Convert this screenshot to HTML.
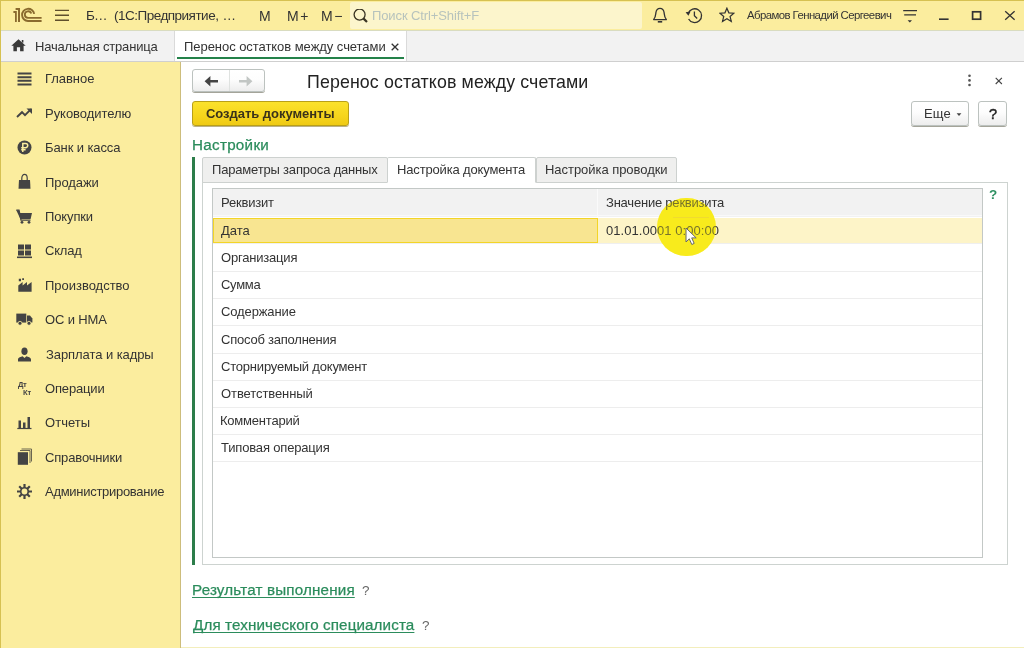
<!DOCTYPE html>
<html lang="ru"><head><meta charset="utf-8">
<title>Перенос остатков между счетами</title>
<style>
*{box-sizing:border-box;margin:0;padding:0}
html,body{width:1024px;height:648px;overflow:hidden;background:#fff;font-family:"Liberation Sans",sans-serif;color:#333;font-size:13px}
.a,.t,svg{position:absolute}
.t{white-space:nowrap;line-height:1;will-change:transform}
#top{left:0;top:0;width:1024px;height:31px;background:#fbed9e;border-bottom:1px solid #d9dcc0}
#search{left:350px;top:2px;width:292px;height:27px;background:#fcf5cc;border-radius:2px}
#tabs{left:0;top:31px;width:1024px;height:31px;background:#f2f2f2;border-bottom:1px solid #cfcfcf}
#tabact{left:174px;top:31px;width:233px;height:30px;background:#fff;border-left:1px solid #dadada;border-right:1px solid #dadada}
#tabact i{position:absolute;left:2px;right:2px;top:25.5px;height:2.5px;background:#24824a}
#side{left:0;top:62px;width:181px;height:586px;background:#fbed9e;border-right:1px solid #cdbd7c}
#frame{left:0;top:0;width:1024px;height:648px;border-left:1px solid #d6c152;border-top:1px solid #d6c152;pointer-events:none}
#botline{left:181px;top:646.5px;width:843px;height:1px;background:#f3eebc}
.btn{position:absolute;border:1px solid #bcc2bf;border-radius:3px;background:linear-gradient(#fff 0%,#fdfdfd 45%,#ededed 100%);box-shadow:0 1px 0 rgba(90,90,70,.55)}
#create{left:192px;top:101px;width:157px;height:25px;border:1px solid #b9a018;background:linear-gradient(#fbe22c,#f6d51c 60%,#efca14);border-radius:3px;box-shadow:0 1px 0 rgba(120,100,20,.5)}
#gbar{left:192.3px;top:157px;width:2.5px;height:407.7px;background:#2c7d4a}
#panel{left:202px;top:182px;width:806px;height:383px;border:1px solid #cdd3d0;background:#fff}
.tab{position:absolute;top:157px;height:26px;border:1px solid #cdd1cf;border-radius:2px 2px 0 0;background:#efefee}
.tab.on{background:#fff;border-bottom-color:#fff}
#grid{left:212px;top:188px;width:771px;height:370px;border:1px solid #c3c8c6;background:#fff}
#ghead{left:213px;top:189px;width:769px;height:28px;background:#f2f2f2}
.row{position:absolute;left:213px;width:769px;height:1px;background:#ededed}
</style></head><body>
<div class="a" id="top"></div>
<div class="a" id="search"></div>
<div class="a" id="tabs"></div>
<div class="a" id="tabact"><i></i></div>
<div class="a" id="side"></div>
<svg style="left:12px;top:6px" width="32" height="18" viewBox="12 6 32 18"><g fill="none" stroke="#8a6a2e"><path d="M13.4 12H15.9V22" stroke-width="1.8"/><path d="M15.6 9H19V22" stroke-width="2"/><path d="M34.2 13.9A6.1 6.1 0 1 0 28 21H41.6" stroke-width="1.9"/><path d="M31.3 13.6A3.3 3.3 0 1 0 28 17.9H41.6" stroke-width="1.8"/></g></svg>
<svg style="left:55px;top:9px" width="15" height="13" viewBox="0 0 15 13"><path d="M0 1.4H14M0 6.3H14M0 11.2H14" stroke="#5f4e2c" stroke-width="1.4" fill="none"/></svg>
<div class="t" style="left:85.72px;top:9.00px;font-size:13.5px;color:#333;">Б<span style="margin-left:-0.90px;">…</span></div>
<div class="t" style="left:113.89px;top:9.00px;font-size:13.5px;color:#333;"><span style="letter-spacing:-0.504px;">(1С:Предприятие,</span> <span style="margin-left:0.35px;">…</span></div>
<div class="t" style="left:259.48px;top:9.00px;font-size:14px;color:#333;">M</div>
<div class="t" style="left:287.28px;top:9.00px;font-size:14px;color:#333;">M<span style="margin-left:1.69px;">+</span></div>
<div class="t" style="left:320.78px;top:9.00px;font-size:14px;color:#333;">M<span style="margin-left:1.49px;">−</span></div>
<svg style="left:353px;top:9px" width="16" height="15" viewBox="0 0 16 15"><circle cx="6.6" cy="5.6" r="5.5" fill="none" stroke="#3a3424" stroke-width="1.3"/><path d="M10.6 9.6L14 13" stroke="#3a3424" stroke-width="2.2"/></svg>
<div class="t" style="left:372.06px;top:9.00px;font-size:13px;color:#b7c3bd;letter-spacing:-0.106px;">Поиск Ctrl+Shift+F</div>
<div class="t" style="left:746.60px;top:10.00px;font-size:11.4px;color:#333;letter-spacing:-0.574px;">Абрамов Геннадий Сергеевич</div>
<svg style="left:652px;top:7px" width="16" height="17" viewBox="0 0 16 17"><path d="M1.6 12.6C3.6 10.6 3.6 8.6 3.9 5.6C4.3 2.9 6 1.4 8 1.4C10 1.4 11.7 2.9 12.1 5.6C12.4 8.6 12.4 10.6 14.4 12.6Z" fill="none" stroke="#333" stroke-width="1.3" stroke-linejoin="round"/><path d="M5.8 14.8H10.2" stroke="#333" stroke-width="1.6"/></svg>
<svg style="left:685px;top:7px" width="18" height="17" viewBox="0 0 18 17"><path d="M3.2 6.2A6.9 6.9 0 1 1 3.6 12" fill="none" stroke="#333" stroke-width="1.3"/><path d="M0.6 5.2L5.6 4.6L3.4 8.8Z" fill="#333"/><path d="M9.4 4.4V8.8L12.2 11.4" fill="none" stroke="#333" stroke-width="1.3"/></svg>
<svg style="left:718.8px;top:7.4px" width="15.8" height="15.8" viewBox="0 0 17 17"><path d="M8.5 1.3L10.6 6.3L16 6.7L11.9 10.2L13.2 15.5L8.5 12.6L3.8 15.5L5.1 10.2L1 6.7L6.4 6.3Z" fill="none" stroke="#333" stroke-width="1.3"/></svg>
<svg style="left:903px;top:9px" width="15" height="15" viewBox="0 0 15 15"><path d="M0.2 1.6H14M1.2 5.9H13" stroke="#333" stroke-width="1.3" fill="none"/><path d="M4.6 11.2H9L6.8 13.6Z" fill="#333"/></svg>
<svg style="left:938px;top:17px" width="12" height="4" viewBox="0 0 12 4"><path d="M1 2.2H10.6" stroke="#333" stroke-width="1.6"/></svg>
<svg style="left:971px;top:10px" width="11" height="11" viewBox="0 0 11 11"><rect x="1.6" y="1.8" width="8" height="7.4" fill="none" stroke="#333" stroke-width="1.7"/></svg>
<svg style="left:1004px;top:10px" width="12" height="11" viewBox="0 0 12 11"><path d="M1.2 1.2L10.6 9.8M10.6 1.2L1.2 9.8" stroke="#333" stroke-width="1.3"/></svg>
<svg style="left:10.5px;top:38.5px" width="15" height="13" viewBox="0 0 15 13"><path d="M7.5 0.3L0.3 6.8H2.4V12.3H5.9V8.2H9.1V12.3H12.6V6.8H14.7Z" fill="#3a3a3a"/><path d="M10.8 1H12.4V3.6H10.8Z" fill="#3a3a3a"/></svg>
<div class="t" style="left:35.06px;top:40.00px;font-size:13px;color:#333;letter-spacing:-0.180px;">Начальная страница</div>
<div class="t" style="left:183.56px;top:40.00px;font-size:13px;color:#333;letter-spacing:-0.050px;">Перенос остатков между счетами</div>
<svg style="left:390.5px;top:42.5px" width="8" height="8" viewBox="0 0 8 8"><path d="M0.7 0.7L7.3 7.3M7.3 0.7L0.7 7.3" stroke="#333" stroke-width="1.3"/></svg>
<div class="t" style="left:45.16px;top:72.00px;font-size:13px;color:#333;letter-spacing:-0.045px;">Главное</div>
<div class="t" style="left:45.16px;top:107.00px;font-size:13px;color:#333;letter-spacing:-0.035px;">Руководителю</div>
<div class="t" style="left:45.16px;top:141.00px;font-size:13px;color:#333;letter-spacing:-0.103px;">Банк и касса</div>
<div class="t" style="left:44.96px;top:176.00px;font-size:13px;color:#333;letter-spacing:-0.076px;">Продажи</div>
<div class="t" style="left:44.96px;top:210.00px;font-size:13px;color:#333;letter-spacing:-0.127px;">Покупки</div>
<div class="t" style="left:45.35px;top:244.00px;font-size:13px;color:#333;letter-spacing:-0.189px;">Склад</div>
<div class="t" style="left:45.16px;top:279.00px;font-size:13px;color:#333;letter-spacing:-0.018px;">Производство</div>
<div class="t" style="left:45.31px;top:313.00px;font-size:13px;color:#333;letter-spacing:-0.153px;">ОС и НМА</div>
<div class="t" style="left:45.58px;top:348.00px;font-size:13px;color:#333;letter-spacing:-0.070px;">Зарплата и кадры</div>
<div class="t" style="left:45.41px;top:382.00px;font-size:13px;color:#333;letter-spacing:-0.164px;">Операции</div>
<div class="t" style="left:45.41px;top:416.00px;font-size:13px;color:#333;letter-spacing:0.050px;">Отчеты</div>
<div class="t" style="left:45.35px;top:451.00px;font-size:13px;color:#333;letter-spacing:-0.152px;">Справочники</div>
<div class="t" style="left:45.40px;top:485.00px;font-size:13px;color:#333;letter-spacing:-0.288px;">Администрирование</div>
<svg style="left:17px;top:72px" width="15" height="14" viewBox="0 0 15 14"><path d="M0.5 1.6H14.5M0.5 5.2H14.5M0.5 8.8H14.5M0.5 12.4H14.5" stroke="#444" stroke-width="2" fill="none"/></svg>
<svg style="left:16px;top:107px" width="17" height="12" viewBox="0 0 17 12"><path d="M1 10L6 5.2L9 8.2L15 2.2" fill="none" stroke="#444" stroke-width="1.9"/><path d="M10.5 1.5H16V7Z" fill="#444"/></svg>
<svg style="left:17px;top:140px" width="15" height="15" viewBox="0 0 15 15"><circle cx="7.5" cy="7.5" r="7" fill="#444"/><path d="M5.8 12V3.4H8.6A2.1 2.1 0 0 1 8.6 7.7H4.2M4.2 9.8H8.6" fill="none" stroke="#fbed9e" stroke-width="1.5"/></svg>
<svg style="left:18px;top:173px" width="13" height="16" viewBox="0 0 13 16"><path d="M1 7H12L12.5 15.7H0.5Z" fill="#444"/><path d="M3.8 8.6V5.2C3.8 2.6 5.2 1.4 6.5 1.4C7.8 1.4 9.2 2.6 9.2 5.2V8.6" fill="none" stroke="#444" stroke-width="1.2"/></svg>
<svg style="left:16px;top:209px" width="17" height="15" viewBox="0 0 17 15"><path d="M0.3 1.2H3L4.2 4H16L14.6 10H4.4Z" fill="#444"/><path d="M0.3 1.2H3L5 11.2H14.5" fill="none" stroke="#444" stroke-width="1.3"/><circle cx="6" cy="13.3" r="1.4" fill="#444"/><circle cx="13" cy="13.3" r="1.4" fill="#444"/></svg>
<svg style="left:17px;top:244px" width="15" height="15" viewBox="0 0 15 15"><path d="M1 0.5H7V5.5H1ZM8 0.5H14V5.5H8ZM1 6.5H7V11.5H1ZM8 6.5H14V11.5H8Z" fill="#444"/><path d="M0 13.3H15" stroke="#444" stroke-width="1.6"/></svg>
<svg style="left:18px;top:278px" width="14" height="14" viewBox="0 0 14 14"><path d="M0.3 13.8V7.5L4.6 4V7.5L9 4V7.5L13.6 4V13.8Z" fill="#444"/><path d="M0.8 0.8H3V3.2H0.8ZM4.2 0.3H6V2H4.2Z" fill="#444"/></svg>
<svg style="left:16px;top:313px" width="17" height="13" viewBox="0 0 17 13"><path d="M0.3 0.6H10.3V9.6H0.3Z" fill="#444"/><path d="M11 2.6H14L16.4 5.6V9.6H11Z" fill="#444"/><circle cx="4" cy="10.3" r="2" fill="#444" stroke="#fbed9e" stroke-width="0.8"/><circle cx="13" cy="10.3" r="2" fill="#444" stroke="#fbed9e" stroke-width="0.8"/></svg>
<svg style="left:17px;top:347px" width="15" height="15" viewBox="0 0 15 15"><ellipse cx="7.5" cy="4.3" rx="3.1" ry="3.8" fill="#444"/><path d="M1 14.5V12.5C1 10.5 4 9.6 5.6 9.2L7.5 11L9.4 9.2C11 9.6 14 10.5 14 12.5V14.5Z" fill="#444"/></svg>
<svg style="left:17px;top:416px" width="15" height="14" viewBox="0 0 15 14"><path d="M1.5 4.5H4V12H1.5ZM6 6.5H8.5V12H6ZM10.5 1H13V12H10.5Z" fill="#444"/><path d="M0.3 12.5H14.5" stroke="#444" stroke-width="1.2"/></svg>
<svg style="left:17px;top:448px" width="15" height="18" viewBox="0 0 15 18"><path d="M4.5 1H14.5V13.5" fill="none" stroke="#6b6650" stroke-width="1"/><path d="M3 2.5H13V15" fill="none" stroke="#6b6650" stroke-width="1"/><path d="M0.8 4.2H11V16.8H0.8Z" fill="#444"/></svg>
<svg style="left:16px;top:483px" width="17" height="17" viewBox="0 0 17 17"><g stroke="#444" stroke-width="2.2"><path d="M8.5 1V16M1 8.5H16M3.2 3.2L13.8 13.8M13.8 3.2L3.2 13.8"/></g><circle cx="8.5" cy="8.5" r="4.6" fill="#444"/><circle cx="8.5" cy="8.5" r="2.9" fill="#fbed9e"/></svg>
<div class="t" style="left:17.94px;top:381.00px;font-size:7.6px;color:#444;font-weight:bold;letter-spacing:-0.373px;">Дт</div>
<div class="t" style="left:23.01px;top:389.00px;font-size:7.6px;color:#444;font-weight:bold;letter-spacing:-0.157px;">Кт</div>
<div class="btn" style="left:192px;top:69px;width:73px;height:23px"></div>
<div class="a" style="left:228.5px;top:70px;width:1px;height:21px;background:#dfe2e0"></div>
<svg style="left:204px;top:75px" width="15" height="12" viewBox="0 0 15 12"><path d="M0.6 6.2L6.4 1V4.9H14V7.5H6.4V11.4Z" fill="#444"/></svg>
<svg style="left:238px;top:75px" width="15" height="12" viewBox="0 0 15 12"><path d="M14.4 6.2L8.6 1V4.9H1V7.5H8.6V11.4Z" fill="#c2c6c4"/></svg>
<div class="t" style="left:306.78px;top:74.00px;font-size:17.8px;color:#222;letter-spacing:0.116px;">Перенос остатков между счетами</div>
<svg style="left:967px;top:74px" width="5" height="13" viewBox="0 0 5 13"><circle cx="2.5" cy="1.8" r="1.3" fill="#555"/><circle cx="2.5" cy="6.4" r="1.3" fill="#555"/><circle cx="2.5" cy="11" r="1.3" fill="#555"/></svg>
<svg style="left:995px;top:76.5px" width="8" height="8" viewBox="0 0 8 8"><path d="M0.7 0.8L6.9 7M6.9 0.8L0.7 7" stroke="#444" stroke-width="1.1"/></svg>
<div class="a" id="create"></div>
<div class="t" style="left:206.48px;top:107.00px;font-size:13px;color:#3a321a;font-weight:bold;letter-spacing:-0.031px;">Создать документы</div>
<div class="btn" style="left:910.5px;top:101px;width:58.5px;height:25px"></div>
<div class="t" style="left:924.16px;top:107.00px;font-size:13px;color:#333;letter-spacing:0.185px;">Еще</div>
<svg style="left:956px;top:113px" width="6" height="4" viewBox="0 0 6 4"><path d="M0.6 0.3H5.4L3 2.9Z" fill="#444"/></svg>
<div class="btn" style="left:977.5px;top:101px;width:29.5px;height:25px"></div>
<div class="t" style="left:988.62px;top:107.00px;font-size:14.5px;color:#222;-webkit-text-stroke:0.45px #222;">?</div>
<div class="t" style="left:192.28px;top:137.00px;font-size:15.2px;color:#2b8c5c;letter-spacing:0.291px;-webkit-text-stroke:0.25px #2b8c5c;">Настройки</div>
<div class="a" id="gbar"></div>
<div class="a" id="panel"></div>
<div class="tab" style="left:202px;width:186px"></div>
<div class="tab on" style="left:387px;width:149px"></div>
<div class="tab" style="left:535.5px;width:141.5px"></div>
<div class="t" style="left:211.56px;top:163.00px;font-size:13px;color:#333;letter-spacing:-0.183px;">Параметры запроса данных</div>
<div class="t" style="left:397.06px;top:163.00px;font-size:13px;color:#333;letter-spacing:-0.154px;">Настройка документа</div>
<div class="t" style="left:545.21px;top:163.00px;font-size:13px;color:#333;letter-spacing:-0.045px;">Настройка проводки</div>
<div class="a" id="grid"></div>
<div class="a" id="ghead"></div>
<div class="a" style="left:597px;top:189px;width:1px;height:28px;background:#fafafa"></div>
<div class="a" style="left:213px;top:215.3px;width:769px;height:1px;background:#f9f9f9"></div>
<div class="a" style="left:213px;top:217.6px;width:769px;height:25.8px;background:#fdf4c8"></div>
<div class="a" style="left:213px;top:217.6px;width:384.6px;height:25.6px;background:#f8e591;border:1.5px solid #f3d527"></div>
<div class="row" style="top:243.4px;background:#efefef"></div>
<div class="row" style="top:270.9px"></div>
<div class="row" style="top:298.1px"></div>
<div class="row" style="top:325.3px"></div>
<div class="row" style="top:352.5px"></div>
<div class="row" style="top:379.7px"></div>
<div class="row" style="top:406.9px"></div>
<div class="row" style="top:434.1px"></div>
<div class="row" style="top:461.3px"></div>
<div class="a" style="left:657px;top:197.5px;width:58.5px;height:58.5px;border-radius:50%;background:#f8ec1c"></div>
<div class="a" style="left:673px;top:216.5px;width:36px;height:1px;background:#ecd33a"></div>
<div class="t" style="left:220.66px;top:196.00px;font-size:13px;color:#333;letter-spacing:-0.186px;">Реквизит</div>
<div class="t" style="left:605.58px;top:196.00px;font-size:13px;color:#333;letter-spacing:-0.213px;">Значение реквизита</div>
<div class="t" style="left:221.24px;top:224.00px;font-size:13px;color:#333;letter-spacing:-0.010px;">Дата</div>
<div class="t" style="left:220.72px;top:251.00px;font-size:13px;color:#333;letter-spacing:-0.193px;">Организация</div>
<div class="t" style="left:220.65px;top:278.00px;font-size:13px;color:#333;letter-spacing:-0.276px;">Сумма</div>
<div class="t" style="left:220.65px;top:305.00px;font-size:13px;color:#333;letter-spacing:-0.117px;">Содержание</div>
<div class="t" style="left:220.55px;top:333.00px;font-size:13px;color:#333;letter-spacing:-0.224px;">Способ заполнения</div>
<div class="t" style="left:220.55px;top:360.00px;font-size:13px;color:#333;letter-spacing:-0.198px;">Сторнируемый документ</div>
<div class="t" style="left:220.61px;top:387.00px;font-size:13px;color:#333;letter-spacing:-0.088px;">Ответственный</div>
<div class="t" style="left:220.16px;top:414.00px;font-size:13px;color:#333;letter-spacing:-0.215px;">Комментарий</div>
<div class="t" style="left:220.94px;top:441.00px;font-size:13px;color:#333;letter-spacing:-0.167px;">Типовая операция</div>
<div class="t" style="left:605.51px;top:224.00px;font-size:13px;color:#333;letter-spacing:0.050px;">01.01.0001 0:00:00</div>
<div class="t" style="left:988.79px;top:188.00px;font-size:13.5px;color:#2f9163;font-weight:bold;">?</div>
<div class="t" style="left:192.38px;top:582.00px;font-size:15.2px;color:#2b8c5c;letter-spacing:0.169px;-webkit-text-stroke:0.25px #2b8c5c;text-decoration:underline;text-decoration-thickness:1.4px;text-underline-offset:1.6px;text-decoration-skip-ink:none;">Результат выполнения</div>
<div class="t" style="left:362.16px;top:584.00px;font-size:13.5px;color:#666;">?</div>
<div class="t" style="left:193.02px;top:617.00px;font-size:15.2px;color:#2b8c5c;letter-spacing:0.117px;-webkit-text-stroke:0.25px #2b8c5c;text-decoration:underline;text-decoration-thickness:1.4px;text-underline-offset:1.6px;text-decoration-skip-ink:none;">Для технического специалиста</div>
<div class="t" style="left:422.36px;top:619.00px;font-size:13.5px;color:#666;">?</div>
<div class="a" style="left:657px;top:197.5px;width:58.5px;height:58.5px;border-radius:50%;background:rgba(248,236,28,.35)"></div>
<svg style="left:685px;top:227px" width="13" height="19" viewBox="0 0 13 19"><path d="M1 1V15L4.3 11.8L6.8 17.5L9.2 16.4L6.7 10.9H11.2Z" fill="#fff" stroke="#666" stroke-width="1"/></svg>
<div class="a" id="botline"></div>
<div class="a" id="frame"></div>
</body></html>
